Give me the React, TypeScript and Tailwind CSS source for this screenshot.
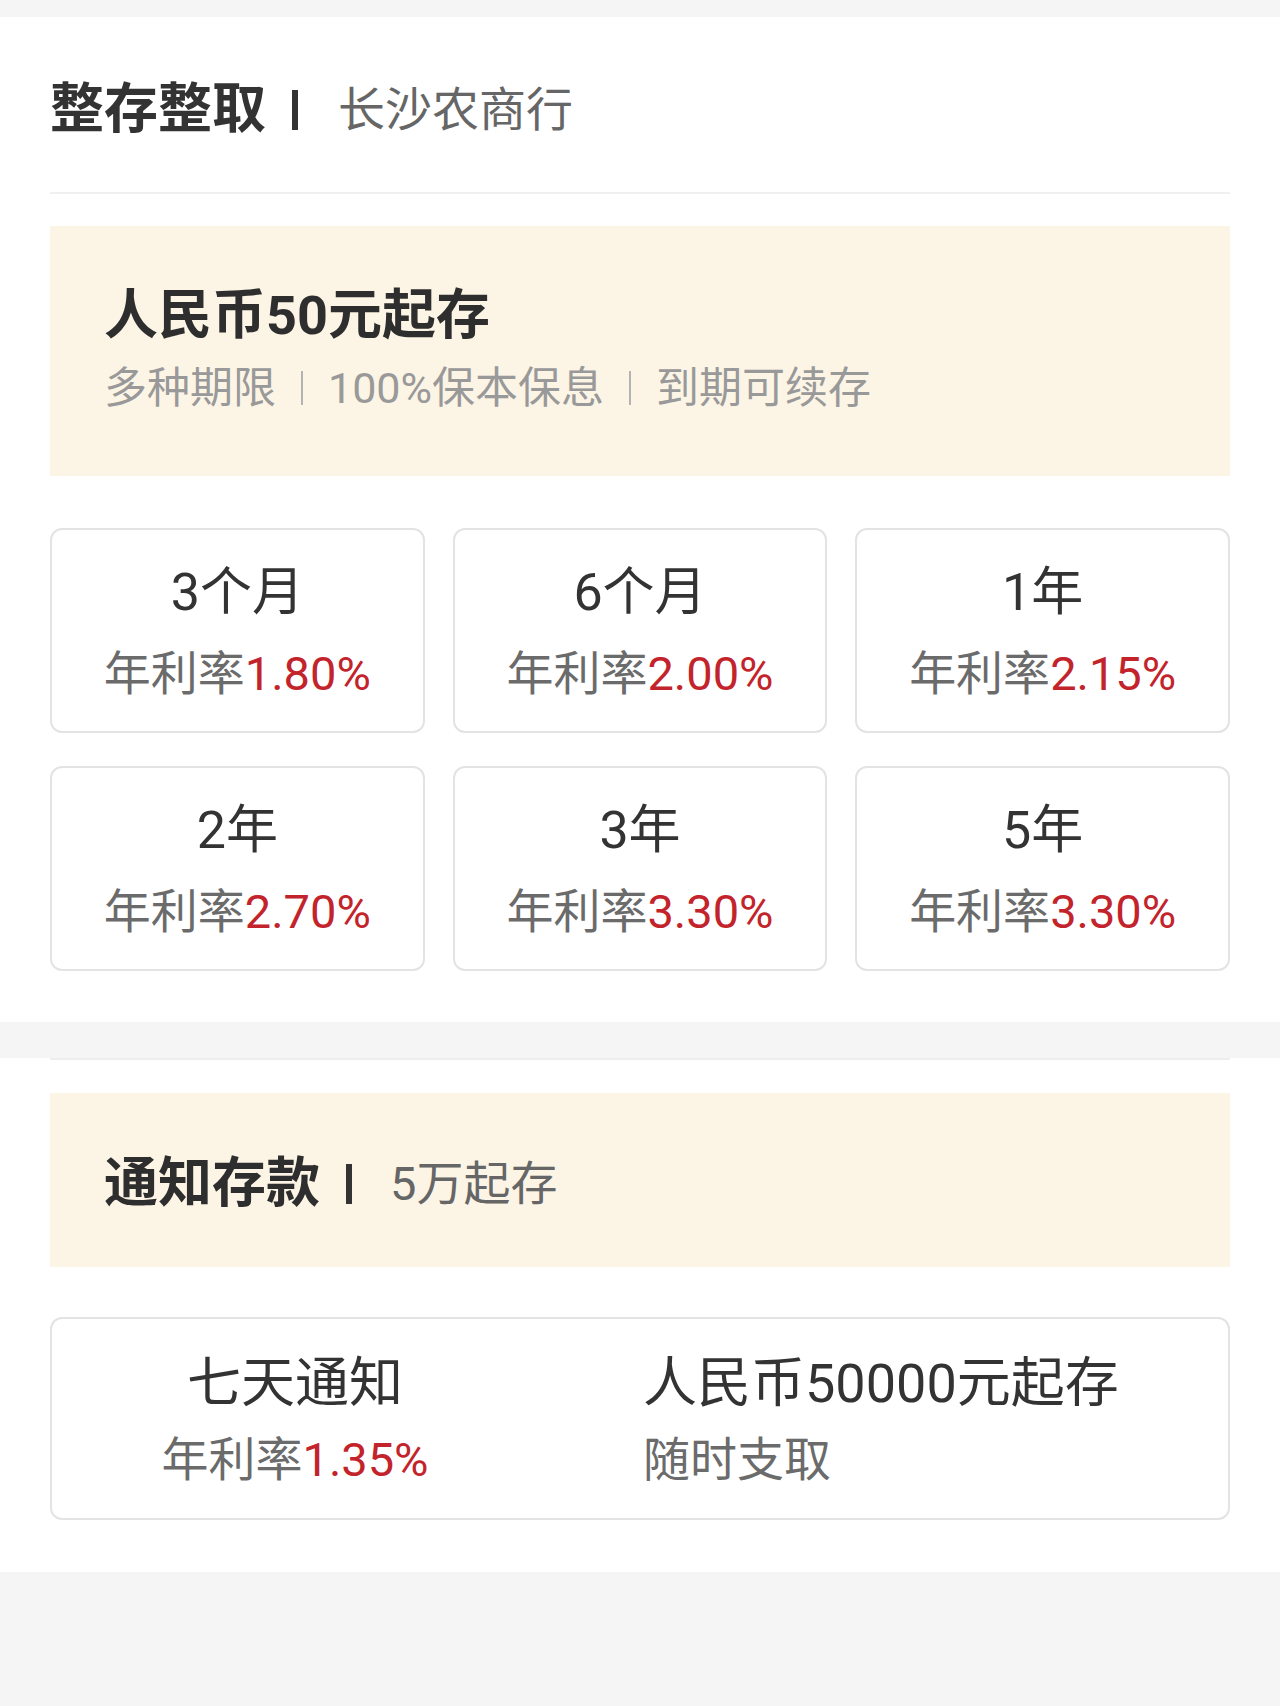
const FONT = "font-['Roboto','Noto_Sans_CJK_SC','Noto_Sans',sans-serif]";

interface Term {
  label: string;
  rate: string;
}

const TERMS: Term[] = [
  { label: '3个月', rate: '1.80%' },
  { label: '6个月', rate: '2.00%' },
  { label: '1年', rate: '2.15%' },
  { label: '2年', rate: '2.70%' },
  { label: '3年', rate: '3.30%' },
  { label: '5年', rate: '3.30%' },
];

function RateLine({ rate }: { rate: string }) {
  return (
    <div className="text-[47px] leading-[50px] whitespace-nowrap">
      <span className="text-[#6b6b6b]">年利率</span>
      <span className="text-[#c3242c]">{rate}</span>
    </div>
  );
}

function TermCard({ term }: { term: Term }) {
  return (
    <div className="h-[205px] border-2 border-[#e3e3e3] rounded-[12px] bg-white flex flex-col items-center pt-[35px]">
      <div className="text-[52px] leading-[56px] text-[#333333]">{term.label}</div>
      <div className="mt-[28px]">
        <RateLine rate={term.rate} />
      </div>
    </div>
  );
}

export default function App() {
  return (
    <div className={`min-h-[1706px] bg-[#f5f5f5] ${FONT}`}>
      <div className="h-[17px]" />

      {/* 整存整取 */}
      <section className="bg-white px-[50px] pb-[51px]">
        <div className="h-[177px] flex items-center pt-[10px] border-b-2 border-[#f0f0f0]">
          <span className="text-[54px] leading-[58px] font-bold text-[#333333]">整存整取</span>
          <span className="inline-block w-[6px] h-[40px] bg-[#333333] ml-[26px] mr-[40px]" />
          <span className="text-[47px] leading-[58px] text-[#666666]">长沙农商行</span>
        </div>

        <div className="mt-[32px] h-[250px] bg-[#fcf5e6] pl-[54px] pt-[61px]">
          <div className="text-[54px] leading-[58px] font-bold text-[#2e2e2e]">人民币50元起存</div>
          <div className="mt-[19px] flex items-center text-[43px] leading-[48px] text-[#999999] whitespace-nowrap">
            <span>多种期限</span>
            <span className="inline-block w-[2px] h-[34px] bg-[#b3b3b3] mx-[25px]" />
            <span>100%保本保息</span>
            <span className="inline-block w-[2px] h-[34px] bg-[#b3b3b3] mx-[25px]" />
            <span>到期可续存</span>
          </div>
        </div>

        <div className="mt-[52px] grid grid-cols-3 gap-x-[28px] gap-y-[33px]">
          {TERMS.map((t) => (
            <TermCard key={t.label} term={t} />
          ))}
        </div>
      </section>

      <div className="h-[36px]" />

      {/* 通知存款 */}
      <section className="bg-white px-[50px] pb-[52px]">
        <div className="border-t-2 border-[#eeeeee]" />
        <div className="mt-[33px] h-[174px] bg-[#fcf5e6] pl-[54px] pt-[8px] flex items-center">
          <span className="text-[54px] leading-[58px] font-bold text-[#2e2e2e]">通知存款</span>
          <span className="inline-block w-[6px] h-[40px] bg-[#333333] ml-[26px] mr-[38px]" />
          <span className="text-[47px] leading-[58px] text-[#666666]">5万起存</span>
        </div>

        <div className="mt-[50px] h-[203px] border-2 border-[#e3e3e3] rounded-[12px] flex pt-[36px]">
          <div className="w-[486px] flex flex-col items-center">
            <div className="text-[54px] leading-[58px] text-[#333333]">七天通知</div>
            <div className="mt-[22px]">
              <RateLine rate="1.35%" />
            </div>
          </div>
          <div className="pl-[105px] flex flex-col">
            <div className="text-[54px] leading-[58px] text-[#333333] whitespace-nowrap">人民币50000元起存</div>
            <div className="mt-[22px] text-[47px] leading-[50px] text-[#6b6b6b]">随时支取</div>
          </div>
        </div>
      </section>
    </div>
  );
}
